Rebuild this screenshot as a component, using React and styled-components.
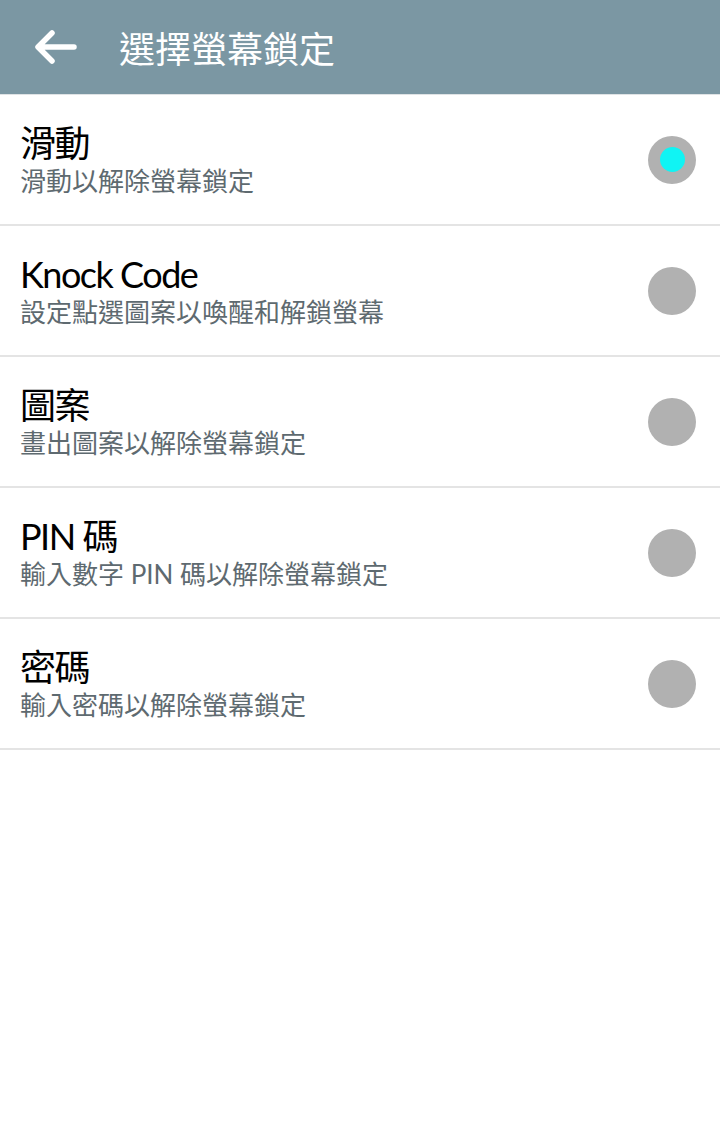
import styled, { createGlobalStyle } from 'styled-components';

const OPTIONS = [
  { title: '滑動', desc: '滑動以解除螢幕鎖定' },
  { title: 'Knock Code', desc: '設定點選圖案以喚醒和解鎖螢幕' },
  { title: '圖案', desc: '畫出圖案以解除螢幕鎖定' },
  { title: 'PIN 碼', desc: '輸入數字 PIN 碼以解除螢幕鎖定' },
  { title: '密碼', desc: '輸入密碼以解除螢幕鎖定' },
];

function App() {
  const selected = 0;

  return (
    <>
      <GlobalStyle />
      <Screen>
        <TopBar>
          <BackButton aria-label="返回">
            <svg width="42" height="34" viewBox="0 0 42 34">
              <path
                d="M39 17H4M17 3L3 17l14 14"
                fill="none"
                stroke="#fff"
                strokeWidth="5.5"
                strokeLinecap="round"
                strokeLinejoin="round"
              />
            </svg>
          </BackButton>
          <Title>選擇螢幕鎖定</Title>
        </TopBar>
        <List>
          {OPTIONS.map((opt, i) => (
            <Row key={opt.title}>
              <Text>
                <OptionTitle>{opt.title}</OptionTitle>
                <OptionDesc>{opt.desc}</OptionDesc>
              </Text>
              <Radio $checked={i === selected} />
            </Row>
          ))}
        </List>
      </Screen>
    </>
  );
}

const GlobalStyle = createGlobalStyle`
  html, body {
    margin: 0;
    background: #fff;
  }

  body {
    font-family: Lato, "Noto Sans CJK TC", sans-serif;
  }
`;

const Screen = styled.div`
  width: 720px;
  min-height: 1147px;
  background: #fff;
`;

const TopBar = styled.header`
  display: flex;
  align-items: center;
  gap: 42px;
  height: 94px;
  padding-left: 35px;
  background: #7b97a3;
  border-bottom: 1px solid #dfe3e5;
`;

const BackButton = styled.button`
  display: flex;
  padding: 0;
  border: none;
  background: none;
`;

const Title = styled.h1`
  margin: 0;
  color: #fff;
  font-size: 36px;
  font-weight: 400;
`;

const List = styled.div`
  display: flex;
  flex-direction: column;
`;

const Row = styled.div`
  display: flex;
  align-items: center;
  justify-content: space-between;
  height: 129px;
  padding: 0 24px 0 20px;
  border-bottom: 2px solid #e4e4e4;
`;

const Text = styled.div`
  display: flex;
  flex-direction: column;
  gap: 2px;
`;

const OptionTitle = styled.div`
  color: #000;
  font-size: 36px;
  line-height: 40px;
  letter-spacing: -1.5px;
`;

const OptionDesc = styled.div`
  color: #5e6a70;
  font-size: 26px;
  line-height: 32px;
`;

const Radio = styled.span`
  display: flex;
  align-items: center;
  justify-content: center;
  width: 48px;
  height: 48px;
  border-radius: 50%;
  background: #b1b1b1;

  &::after {
    content: '';
    display: ${(p) => (p.$checked ? 'block' : 'none')};
    width: 25px;
    height: 25px;
    border-radius: 50%;
    background: #10f4f4;
  }
`;

export default App;
